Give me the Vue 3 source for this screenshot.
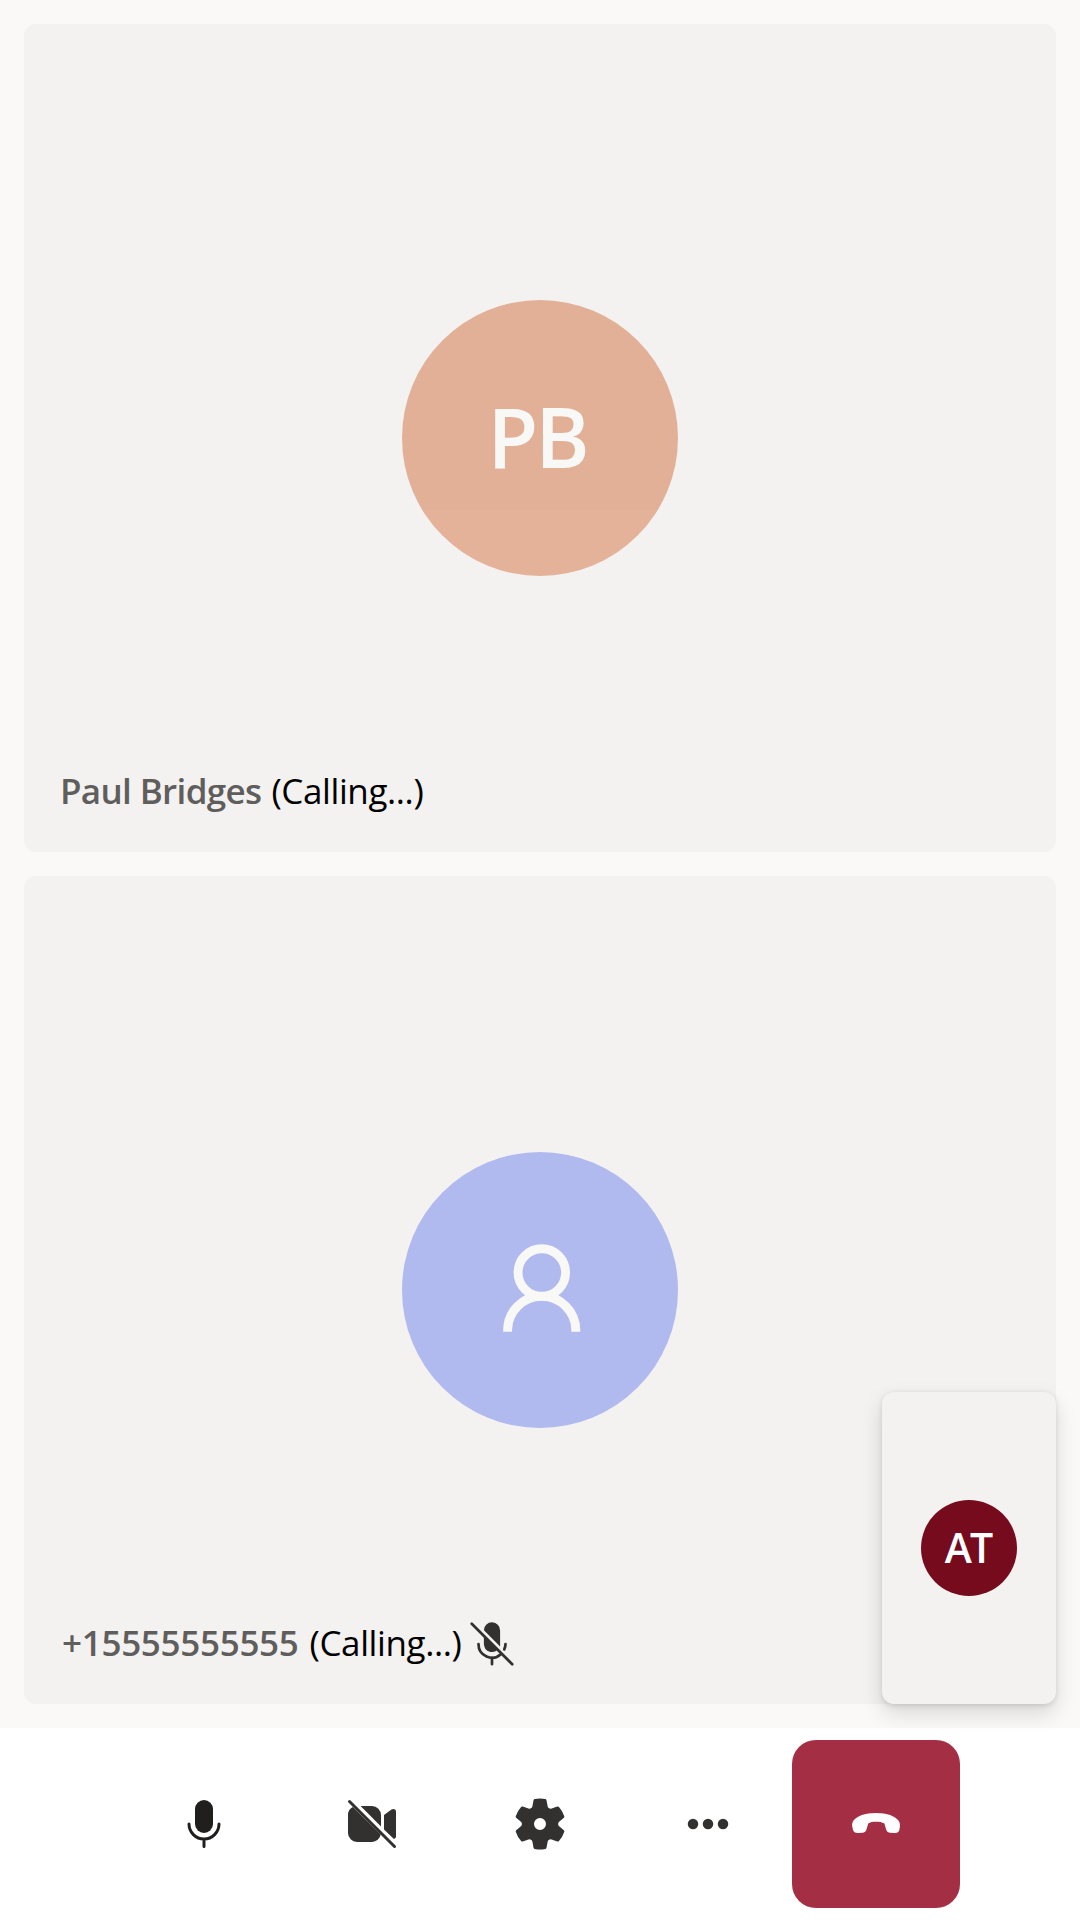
<script setup>
const participants = [
  { id: 'paul', name: 'Paul Bridges', status: '(Calling...)', initials: 'PB', muted: false },
  { id: 'phone', name: '+15555555555', status: '(Calling...)', initials: '', muted: true },
]
</script>

<template>
  <div class="call">
    <main class="gallery">
      <section v-for="p in participants" :key="p.id" class="tile" :class="p.id">
        <div class="avatar">
          <span v-if="p.initials" class="initials">{{ p.initials }}</span>
          <svg v-else viewBox="0 0 276 276" fill="none" stroke="#f8f8f6" stroke-width="8.9">
            <circle cx="139.8" cy="120.6" r="23.8" />
            <path d="M105.6 179.8v-1.5a34.1 34 0 0 1 68.2 0v1.5" />
          </svg>
        </div>
        <div class="label">
          <span class="name">{{ p.name }}</span>
          <span class="status">{{ p.status }}</span>
          <svg v-if="p.muted" class="muted" viewBox="0 0 20 20" fill="#323130">
            <path d="M7 4.9A3 3 0 0 1 13 5v5.9z" />
            <path d="M7 6.9V10a3 3 0 0 0 5.1 2.1z" />
            <path
              d="M5 10a5 5 0 0 0 8.4 3.7M15 10a5 5 0 0 1-.45 2M10 15v2.5M2.5 2.5l15 15"
              fill="none"
              stroke="#323130"
              stroke-linecap="round"
            />
          </svg>
        </div>
      </section>
      <aside class="local">
        <div class="local-avatar"><span class="local-initials">AT</span></div>
      </aside>
    </main>

    <footer class="controls">
      <button aria-label="Mute">
        <svg viewBox="0 0 20 20" fill="#201f1e">
          <rect x="7" y="2" width="6" height="11" rx="3" />
          <path d="M5 10a5 5 0 0 0 10 0M10 15v2.5" fill="none" stroke="#201f1e" stroke-linecap="round" />
        </svg>
      </button>
      <button aria-label="Turn camera on">
        <svg viewBox="0 0 20 20" fill="#323130">
          <path d="M3.6 4.3A3 3 0 0 0 2 7v6a3 3 0 0 0 3 3h5a3 3 0 0 0 2.9-2.5z" />
          <path d="M6.2 4H10a3 3 0 0 1 3 3v3.8z" />
          <path d="M14 7l2.5-1.8c.7-.5 1.5-.1 1.5.7v8.2c0 .4-.3.8-.7.9L14 11.8z" />
          <path d="M2.5 2.5l15 15" stroke="#323130" stroke-linecap="round" />
        </svg>
      </button>
      <button aria-label="Devices">
        <svg viewBox="0 0 20 20" fill="#323130" fill-rule="evenodd">
          <path
            d="M1.91 7.38A8.5 8.5 0 0 1 3.7 4.3a.5.5 0 0 1 .54-.13l1.92.68a1 1 0 0 0 1.32-.76l.36-2a.5.5 0 0 1 .4-.4 8.53 8.53 0 0 1 3.55 0c.2.04.35.2.38.4l.37 2a1 1 0 0 0 1.32.76l1.92-.68a.5.5 0 0 1 .54.13 8.5 8.5 0 0 1 1.78 3.08c.06.2 0 .4-.15.54l-1.56 1.32a1 1 0 0 0 0 1.52l1.56 1.32a.5.5 0 0 1 .15.54 8.5 8.5 0 0 1-1.78 3.08.5.5 0 0 1-.54.13l-1.92-.68a1 1 0 0 0-1.32.76l-.37 2a.5.5 0 0 1-.38.4 8.53 8.53 0 0 1-3.56 0 .5.5 0 0 1-.39-.4l-.36-2a1 1 0 0 0-1.32-.76l-1.92.68a.5.5 0 0 1-.54-.13 8.5 8.5 0 0 1-1.78-3.08.5.5 0 0 1 .15-.54l1.56-1.32a1 1 0 0 0 0-1.52L2.06 7.92a.5.5 0 0 1-.15-.54ZM8 10a2 2 0 1 0 4 0 2 2 0 0 0-4 0Z"
          />
        </svg>
      </button>
      <button aria-label="More">
        <svg viewBox="0 0 20 20" fill="#323130">
          <circle cx="5" cy="10" r="1.75" />
          <circle cx="10" cy="10" r="1.75" />
          <circle cx="15" cy="10" r="1.75" />
        </svg>
      </button>
      <button class="hangup" aria-label="Leave">
        <svg viewBox="0 0 20 20" fill="#fff">
          <path
            d="M10 6.3c3.8 0 6.3 1 7.5 2.5.5.7.6 1.5.4 2.5l-.1.6c-.2.8-.8 1.2-1.6 1.1l-1.6-.1c-.8-.1-1.1-.5-1.3-1.3l-.5-1.8C12 9.4 11 9.25 10 9.25S8 9.4 7.4 9.8l-.5 1.8c-.2.8-.5 1.2-1.3 1.3L4 13c-.8.1-1.4-.3-1.7-1.1l-.1-.6c-.3-1-.2-1.8.3-2.5C3.700 7.300 6.200 6.300 10 6.300z"
          />
        </svg>
      </button>
    </footer>
  </div>
</template>

<style>
body {
  margin: 0;
}
</style>

<style scoped>
.call {
  display: flex;
  flex-direction: column;
  width: 1080px;
  height: 1920px;
  background: #fff;
  font-family: "Open Sans", "Noto Sans", sans-serif;
}
.gallery {
  position: relative;
  box-sizing: border-box;
  height: 1728px;
  padding: 24px;
  display: flex;
  flex-direction: column;
  gap: 24px;
  background: #faf9f8;
}
.tile {
  flex: 1;
  display: grid;
  border-radius: 12px;
  background: #f3f2f1;
}
.avatar,
.label {
  grid-area: 1 / 1;
}
.avatar {
  place-self: center;
  display: flex;
  align-items: center;
  justify-content: center;
  width: 276px;
  height: 276px;
  border-radius: 50%;
  background: #b1baef;
}
.paul .avatar {
  background: linear-gradient(#e2b097 209px, #e4b298 209px);
}
.avatar svg {
  width: 276px;
  height: 276px;
}
.initials {
  padding: 0 6px 4px 0;
  color: #f8f8f6;
  font-size: 82.5px;
  font-weight: 600;
  line-height: 112px;
  letter-spacing: -3px;
}
.label {
  place-self: end start;
  display: flex;
  align-items: center;
  height: 54px;
  margin: 0 0 34px 36px;
  font-size: 35px;
  line-height: 54px;
  white-space: nowrap;
}
.name {
  color: #605e5c;
  font-weight: 600;
  letter-spacing: -0.65px;
}
.phone .label {
  margin: 0 0 34px 38px;
}
.phone .name {
  letter-spacing: -0.3px;
}
.status {
  margin-left: 10px;
  color: #000;
  letter-spacing: -0.4px;
}
.phone .status {
  margin-left: 11px;
}
.muted {
  width: 54px;
  height: 54px;
  margin: 2px 0 0 4px;
}
.local {
  position: absolute;
  right: 24px;
  bottom: 24px;
  display: flex;
  align-items: center;
  justify-content: center;
  width: 174px;
  height: 312px;
  border-radius: 12px;
  background: #f3f2f1;
  box-shadow: 0 9.6px 21.6px rgba(0, 0, 0, 0.132), 0 1.8px 5.4px rgba(0, 0, 0, 0.108);
}
.local-avatar {
  display: flex;
  align-items: center;
  justify-content: center;
  width: 96px;
  height: 96px;
  border-radius: 50%;
  background: #750b1c;
}
.local-initials {
  padding: 0 2px 2px 0;
  color: #fff;
  font-size: 41px;
  font-weight: 600;
  line-height: 56px;
  letter-spacing: -2px;
}
.controls {
  display: flex;
  align-items: center;
  justify-content: center;
  height: 192px;
}
.controls button {
  display: flex;
  align-items: center;
  justify-content: center;
  width: 168px;
  height: 168px;
  padding: 0;
  border: 0;
  border-radius: 24px;
  background: none;
}
.controls svg {
  width: 60px;
  height: 60px;
}
.controls .hangup {
  background: #a42e43;
}
</style>
